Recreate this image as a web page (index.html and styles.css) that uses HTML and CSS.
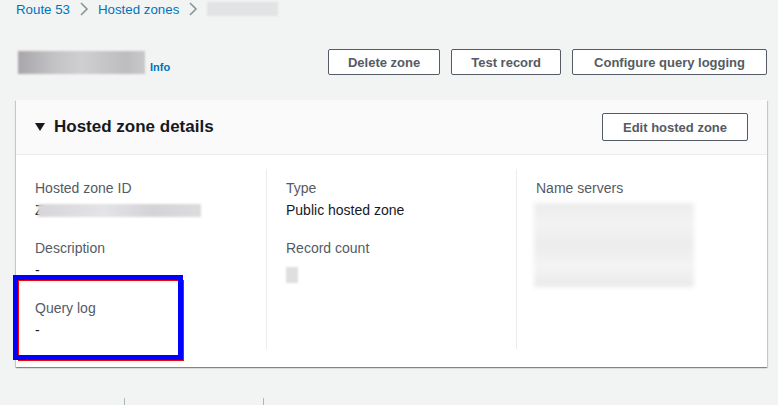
FILE: index.html
```html
<html>
<head>
<meta charset="utf-8">
<link rel="stylesheet" href="styles.css">
</head>
<body>
<div id="page">
	<div class="crumbs">
		<a href="#">Route 53</a>
		<span class="sep"><svg width="10" height="14" viewBox="0 0 10 14"><path d="M2 1 L8 7 L2 13" fill="none" stroke="#879596" stroke-width="1.6"/></svg></span>
		<a href="#">Hosted zones</a>
		<span class="sep"><svg width="10" height="14" viewBox="0 0 10 14"><path d="M2 1 L8 7 L2 13" fill="none" stroke="#879596" stroke-width="1.6"/></svg></span>
		<span class="blur crumbBlur"></span>
	</div>

	<div class="titleRow">
		<div class="title">
			<span class="blur nameBlur"></span>
			<a href="#" class="info">Info</a>
		</div>
		<div class="actions">
			<button class="btn">Delete zone</button>
			<button class="btn">Test record</button>
			<button class="btn">Configure query logging</button>
		</div>
	</div>

	<div class="panel">
		<div class="panelHead">
			<h2><span class="caret"></span>Hosted zone details</h2>
			<button class="btn">Edit hosted zone</button>
		</div>
		<div class="panelBody">
			<div class="col">
				<div class="field">
					<div class="label">Hosted zone ID</div>
					<div class="value">Z<span class="blur idBlur"></span></div>
				</div>
				<div class="field">
					<div class="label">Description</div>
					<div class="value">-</div>
				</div>
				<div class="field">
					<div class="label">Query log</div>
					<div class="value">-</div>
				</div>
			</div>
			<div class="col">
				<div class="field">
					<div class="label">Type</div>
					<div class="value">Public hosted zone</div>
				</div>
				<div class="field">
					<div class="label">Record count</div>
					<div class="value"><span class="blur countBlur"></span></div>
				</div>
			</div>
			<div class="col">
				<div class="field">
					<div class="label">Name servers</div>
					<div class="blur nsBlur"></div>
				</div>
			</div>
		</div>
	</div>

	<div class="tabs">
		<span class="tab"></span>
		<span class="tab"></span>
	</div>

	<!-- highlight drawn over the query log field -->
	<div class="markRed"></div>
	<div class="markBlue"></div>
</div>
</body>
</html>
```

FILE: styles.css
```css
body
{
	margin: 0;
	background-color: #f2f3f3;
	font-family: "Liberation Sans", Arial, sans-serif;
	color: #16191f;
	overflow: hidden;
}
#page
{
	position: relative;
	width: 778px;
	height: 405px;
}
a
{
	color: #0073bb;
	text-decoration: none;
}
.crumbs
{
	display: flex;
	align-items: center;
	height: 18px;
	padding-left: 16px;
	font-size: 13.3px;
}
.crumbs .sep
{
	display: flex;
	margin: 0 9px 0 9px;
}
.blur
{
	display: inline-block;
	background: linear-gradient(90deg, #d6d6d8, #e4e4e6 40%, #d4d4d6 70%, #dcdcde);
	filter: blur(1px);
}
.crumbBlur
{
	width: 71px;
	height: 14px;
	margin-left: 0;
	background: #e2e3e4;
}
.titleRow
{
	display: flex;
	justify-content: space-between;
	align-items: center;
	padding: 31px 11px 0 18px;
	height: 26px;
}
.title
{
	display: flex;
	align-items: flex-end;
}
.nameBlur
{
	width: 127px;
	height: 23px;
	background: linear-gradient(90deg, #a9a6ab, #c4c3c6 30%, #cfcfd1 50%, #bdbdbf 85%, #c8c8ca);
}
.info
{
	font-size: 11px;
	font-weight: bold;
	margin-left: 5px;
	line-height: 13px;
}
.actions
{
	display: flex;
	gap: 11px;
}
.btn
{
	height: 26px;
	padding: 0 19px;
	border: 1px solid #545b64;
	border-radius: 2px;
	background: #fff;
	color: #545b64;
	font-family: "Liberation Sans", Arial, sans-serif;
	font-size: 13px;
	font-weight: bold;
}
.actions .btn:last-child
{
	padding: 0 21px;
}
.panel
{
	margin: 25px 11px 0 16px;
	background: #fff;
	box-shadow: 0 1px 1px 0 rgba(0, 28, 36, 0.3), 1px 1px 1px 0 rgba(0, 28, 36, 0.15), -1px 1px 1px 0 rgba(0, 28, 36, 0.15);
}
.panelHead
{
	display: flex;
	justify-content: space-between;
	align-items: center;
	height: 54px;
	padding: 0 19px 0 19px;
	background: #fafafa;
	border-bottom: 1px solid #eaeded;
}
.panelHead h2
{
	display: flex;
	align-items: center;
	margin: 0;
	font-size: 17px;
	font-weight: bold;
	color: #16191f;
}
.caret
{
	width: 0;
	height: 0;
	border-left: 5px solid transparent;
	border-right: 5px solid transparent;
	border-top: 8px solid #16191f;
	margin-right: 9px;
}
.panelHead .btn
{
	height: 28px;
	padding: 0 20px;
}
.panelBody
{
	display: grid;
	grid-template-columns: 250px 250px 1fr;
	padding: 14px 0 18px 0;
}
.col
{
	padding: 9px 0 7px 19px;
	min-height: 163px;
}
.col + .col
{
	border-left: 1px solid #eaeded;
	padding-left: 19px;
}
.field
{
	margin-bottom: 15px;
}
.field:last-child
{
	margin-bottom: 0;
}
.field + .field
{
	padding-top: 1px;
}
.label
{
	font-size: 14px;
	line-height: 20px;
	color: #545b64;
}
.value
{
	display: flex;
	align-items: center;
	font-size: 14px;
	line-height: 24px;
	height: 24px;
	color: #16191f;
}
.idBlur
{
	width: 163px;
	height: 13px;
	margin-left: -6px;
}
.countBlur
{
	width: 12px;
	height: 16px;
	margin-top: 10px;
	background: #e0dfdf;
}
.nsBlur
{
	display: block;
	width: 160px;
	height: 84px;
	margin: 5px 0 0 -2px;
	background: linear-gradient(180deg, #ececec, #f3f3f3 25%, #ececec 50%, #f4f4f4 75%, #eaeaea);
	filter: blur(2px);
}
.tabs
{
	display: flex;
	margin: 31px 0 0 124px;
}
.tab
{
	width: 138px;
	height: 8px;
	border-left: 1px solid #aab7b8;
}
.markBlue
{
	position: absolute;
	left: 13px;
	top: 275px;
	width: 160px;
	height: 75px;
	border: 5px solid #0000ff;
}
.markRed
{
	position: absolute;
	left: 18px;
	top: 280px;
	width: 164px;
	height: 79px;
	border: 1px solid #ff0000;
}
```
